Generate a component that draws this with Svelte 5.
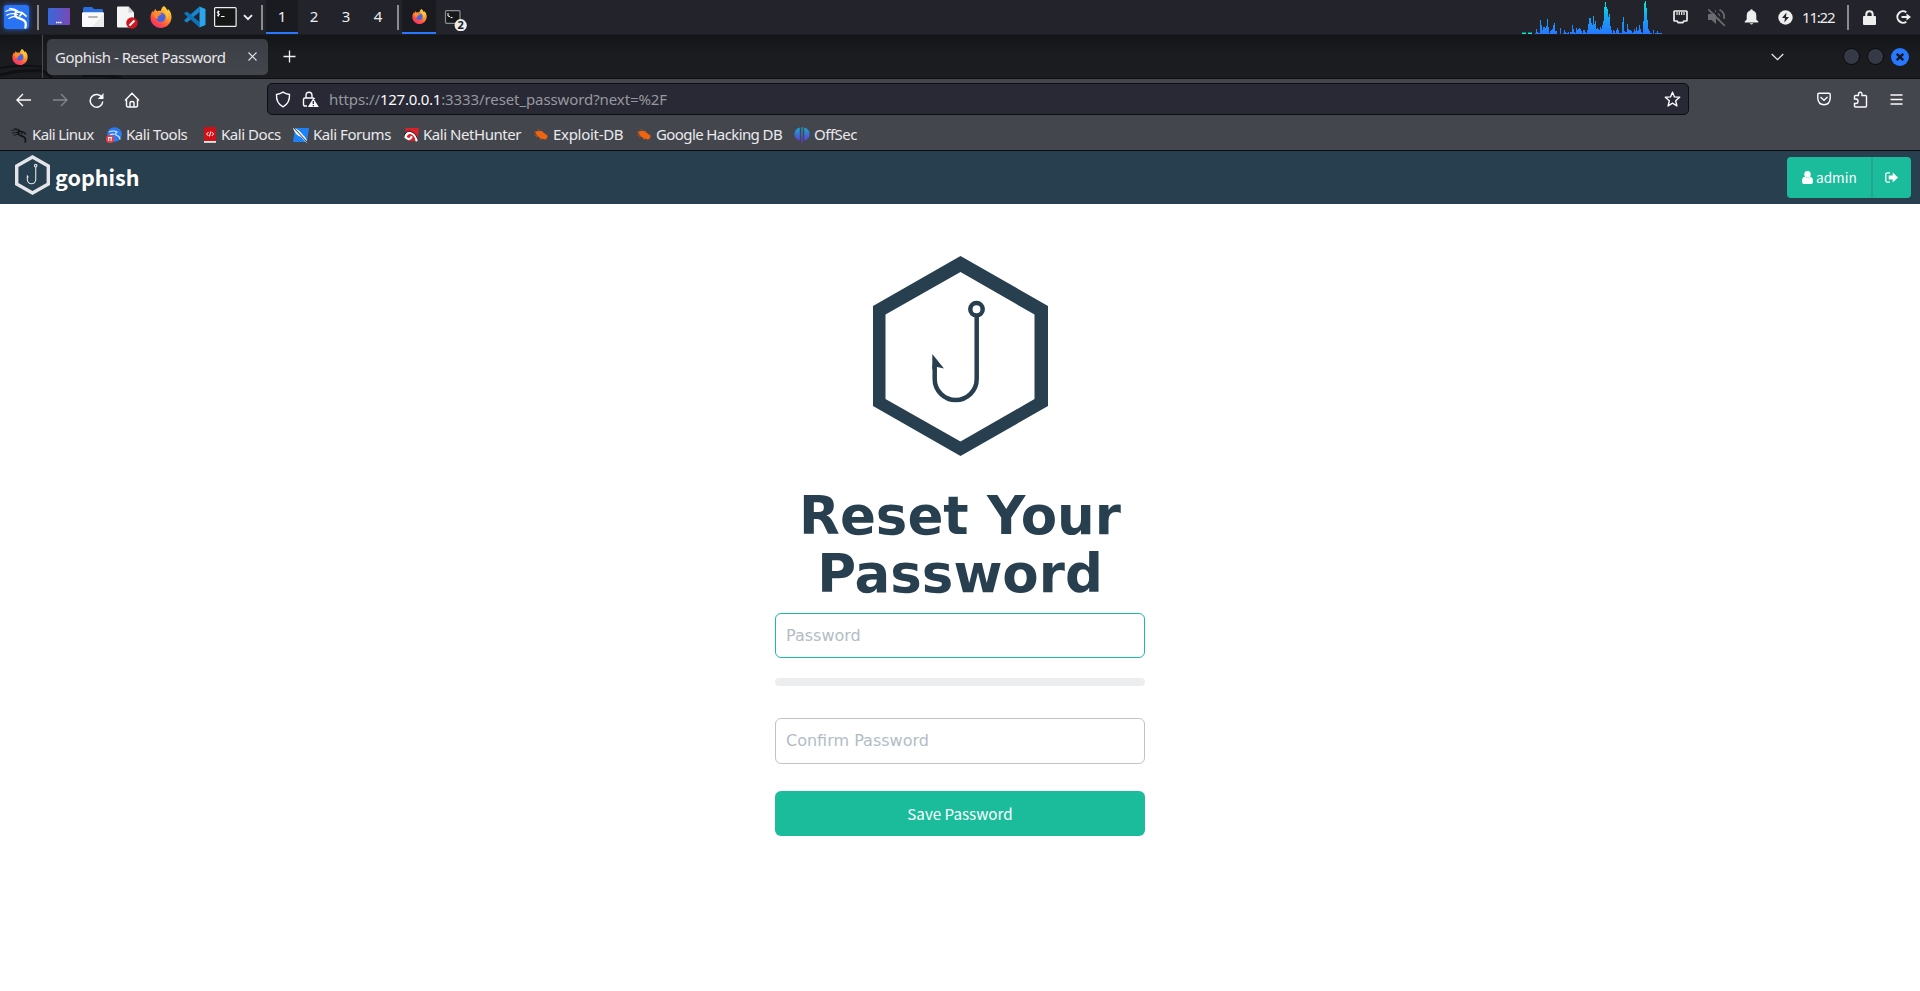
<script>
  const bars = [
    1,5,2,1,1,14,9,4,7,7,6,8,15,7,1,3,4,5,9,11,3,3,0,0,0,6,0,0,1,4,2,1,1,2,0,2,2,9,5,2,1,6,4,5,6,5,3,1,4,4,2,1,
    4,10,16,16,11,9,18,10,13,5,6,5,4,7,5,9,13,27,32,27,25,17,20,8,4,1,4,3,1,4,6,4,1,1,1,12,17,3,2,2,10,5,4,4,3,1,2,5,3,7,
    3,4,9,5,2,1,13,31,33,26,14,5,3,1,1,0,4,0,1,1,3,1,1,1,1
  ];
  const bookmarks = [
    { name: 'Kali Linux', icon: 'dragon', gap: 5, w: 61, after: 13, track: -0.6 },
    { name: 'Kali Tools', icon: 'tools', gap: 4, w: 64, after: 13, track: -0.45 },
    { name: 'Kali Docs', icon: 'docs', gap: 2, w: 60, after: 12, track: -0.45 },
    { name: 'Kali Forums', icon: 'forums', gap: 4, w: 78, after: 12, track: -0.45 },
    { name: 'Kali NetHunter', icon: 'hunter', gap: 4, w: 98, after: 12, track: -0.45 },
    { name: 'Exploit-DB', icon: 'bug', gap: 4, w: 71, after: 12, track: -0.3 },
    { name: 'Google Hacking DB', icon: 'bug', gap: 4, w: 126, after: 12, track: -0.6 },
    { name: 'OffSec', icon: 'offsec', gap: 4, w: 44, after: 0, track: -0.5 }
  ];
</script>

{#snippet firefox(size)}
  <svg width={size} height={size} viewBox="0 0 22 22">
    <defs>
      <linearGradient id="ffg" x1=".85" y1="0" x2=".2" y2="1">
        <stop offset="0" stop-color="#ffe34a" /><stop offset=".4" stop-color="#ff9a2b" /><stop offset=".75" stop-color="#ff4a45" /><stop offset="1" stop-color="#f02a86" />
      </linearGradient>
    </defs>
    <path fill="url(#ffg)" d="M13.8 0c2 1.300 2.800 2.800 3.500 4.400.6-.1.500-.9.400-1.600C20.400 5 21.600 8 21.500 11.300 21.300 17.300 16.800 22 11 22S.5 17.500.5 11.700c0-3 .8-5 2.200-7L3 6.600l2.400-3.800c.2 1.300.8 2 2 2.400 1-.5 2.300-.5 3.300-.2C11.300 3 12 1.300 13.800 0z" />
    <circle cx="10.800" cy="11.400" r="4.700" fill="#4a63e0" />
    <path fill="#ff8b2c" d="M3 7.500c2-1.800 4.500-2 6.500-.5 1.200.2 2 .6 2.600 1.300-1.800.3-2.200 1.200-3.700 1.700-1 .4-.8 2 .2 3-2.600-.3-5-2.400-5.600-5.500z" />
    <path fill="#ffc63c" d="M14.300 5.500c2.500 2.400 3.300 5.300 2.200 8.200 2-1.700 2.300-5.500 1.200-8l-2-1.700z" />
  </svg>
{/snippet}

{#snippet dragon(color, w)}
  <svg width={w} height={w} viewBox="0 0 24 24" fill="none" stroke={color} stroke-linecap="round">
    <path stroke-width="1.300" d="M1 5.500c4-2 8-2 12 .3M2 9.500c3-1.700 7-2 11-.6M4 13c2-1.500 4.500-2.200 8-2.100M5 2.500c3 0 6 .8 8.500 2.600" />
    <path stroke-width="2.400" d="M11.500 6c-1.500 2.500-1 5 1.500 6.200 4 1.500 7.500 2 8.500 5.300.5 2 .2 3.500-.2 5" />
    <path stroke-width="1.800" d="M13 6.500c3-.3 5.500.5 7 2.200l2 1.800M17 8.500l-1.500 1.700" />
  </svg>
{/snippet}

{#snippet hexHook(w, h, color, frame, hook)}
  <svg width={w} height={h} viewBox="0 0 175 200">
    <path fill={color} fill-rule="evenodd" d={frame} />
    <g fill="none" stroke={color} stroke-width={hook}>
      <circle cx="103.500" cy="53.300" r="6.200" />
      <path d="M103.700 60v63a21 21 0 0 1-42 0v-14" />
    </g>
    <path fill={color} d="M59.300 98l11.700 14.500-9-2-2.700 3z" />
  </svg>
{/snippet}

<div class="screen">
  <header class="panel">
    <span class="cell kali">
      <span class="kbox">{@render dragon('#fff', 23)}</span>
    </span>
    <i class="sep"></i>
    <div class="launch">
      <span class="cell w34">
        <svg width="22" height="18" viewBox="0 0 22 18"><defs><linearGradient id="dk"><stop offset="0" stop-color="#3868dc" /><stop offset="1" stop-color="#7a48b4" /></linearGradient></defs><rect width="22" height="17" rx="1" fill="url(#dk)" /><path d="M8 14.500h1.500m.5 0h1.500m.5 0h1.500" stroke="#fff" stroke-width="1.400" /></svg>
      </span>
      <span class="cell w34">
        <svg width="22" height="20" viewBox="0 0 22 20"><path fill="#2a6fdc" d="M1 2q0-2 1.500-2H10l2 2h8q1 0 1 1.500V8H1z" /><rect y="5.300" width="22" height="14.700" rx="1" fill="#fafafa" /><path d="M22 6v14H10z" fill="#ececec" /><path d="M7 10h8" stroke="#b5b5b5" stroke-width="2" stroke-linecap="round" /></svg>
      </span>
      <span class="cell w34">
        <svg width="22" height="23" viewBox="0 0 22 23"><path fill="#f5f5f5" d="M1 1.500Q1 .5 2 .5h10.500l5.500 6v14q0 1-1 1H2q-1 0-1-1z" /><path fill="#d0d0d0" d="M12.500.5v6H18z" /><circle cx="16" cy="17" r="5.800" fill="#cf1720" /><path d="M13.500 19.500l5-5" stroke="#fff" stroke-width="2" /></svg>
      </span>
      <span class="cell w34">{@render firefox(22)}</span>
      <span class="cell w34">
        <svg width="22" height="22" viewBox="0 0 22 22"><path fill="#1687cf" d="M15.500.5v5.600L3 16.500.7 15.300q-1-.7 0-1.500z" /><path fill="#0f73b8" d="M15.500 21.500v-5.600L3 5.500.7 6.700q-1 .7 0 1.500z" /><path fill="#2ba4ee" d="M15.500.5l6 2.500v16l-6 2.500z" /></svg>
      </span>
      <span class="cell term">
        <svg width="23" height="20" viewBox="0 0 23 20"><rect x=".6" y=".6" width="21.500" height="18.800" rx="1" fill="#151616" stroke="#eee" stroke-width="1.200" /><path d="M5.500 4.500q-2-.5-2.300.6t1.200 1.300 1 1.400-2.300.5M4.300 3.600v6M7 9.500h3.500" fill="none" stroke="#fff" /></svg>
      </span>
      <span class="cell chev">
        <svg width="10" height="7" viewBox="0 0 10 7"><path d="M1 1.200l4 4 4-4" fill="none" stroke="#eee" stroke-width="1.900" /></svg>
      </span>
    </div>
    <i class="sep"></i>
    <div class="spaces">
      {#each [1, 2, 3, 4] as n}
        <span class="space" class:on={n === 1}>{n}</span>
      {/each}
    </div>
    <i class="sep late"></i>
    <span class="cell task on">{@render firefox(15)}</span>
    <span class="cell task2">
      <svg width="25" height="26" viewBox="0 0 25 26"><rect x="1.500" y="5.700" width="14.500" height="12.600" rx="1" fill="#17181a" stroke="#8a8c90" stroke-width="1.200" /><path d="M4 8v3l2 .5M6.500 12.500h2" fill="none" stroke="#fff" /><circle cx="16.700" cy="20.200" r="6.100" fill="#ececec" /><text x="16.700" y="24.200" text-anchor="middle" font-size="11" font-weight="700" fill="#1b1c20">2</text></svg>
    </span>

    <div class="tray">
      <svg class="graph" width="141" height="34" viewBox="0 0 141 34">
        <defs><linearGradient id="cpu" gradientUnits="userSpaceOnUse" x1="0" y1="0" x2="0" y2="34"><stop offset="0" stop-color="#00f5dc" /><stop offset=".5" stop-color="#16a5f0" /><stop offset="1" stop-color="#2777ff" /></linearGradient></defs>
        <path d="M0 32.500h4M6 32.500h4" stroke="#0b7f78" /><path d="M0 33.500h4M6 33.500h4" stroke="#1be8c8" />
        {#each bars as h, i}
          <rect x={13 + i} y={34 - h} width="1" height={h} fill="url(#cpu)" />
        {/each}
      </svg>
      <svg class="net" width="15" height="14" viewBox="0 0 15 14"><path d="M1.800 1h11.400q.8 0 .8.8v8.400q0 .8-.8.8H11L9.800 12.600H5.200L4 11H1.800q-.8 0-.8-.8V1.800Q1 1 1.800 1z" fill="none" stroke="#eee" stroke-width="1.700" /><path d="M4 2v3M6.300 2v3M8.700 2v3M11 2v3" stroke="#eee" stroke-width="1.200" /></svg>
      <svg class="mute" width="19" height="19" viewBox="0 0 19 19" fill="none" stroke="#6b6c70"><path fill="#6b6c70" stroke="none" d="M1 6h3.500L9 2v14l-4.500-4H1z" /><path stroke-width="1.700" d="M11 5.500q3 3.500 0 7M12.500 1.800q5.500 2.500 4.500 9" /><path stroke="#22232b" stroke-width="2" d="M3 0l16 16" /><path stroke-width="1.800" d="M1.300 1.300l16.500 16.500" /></svg>
      <svg class="bell" width="15" height="16" viewBox="0 0 15 16" fill="#eee"><path d="M7.500.3q1.200 0 1.300 1.300 3.500 1 3.500 5v4l2 2v.9H.7v-.9l2-2v-4q0-4 3.500-5Q6.300.3 7.500.3zM5.700 14.300h3.600q-1.800 2.400-3.600 0z" /></svg>
      <svg class="power" width="15" height="15" viewBox="0 0 15 15"><circle cx="7.500" cy="7.500" r="7.200" fill="#eee" /><path d="M8.500 2.500L4 8h3l-.7 4.500L11 7H8z" fill="#22232b" /></svg>
      <span class="clock">11:22</span>
      <i class="sep traysep"></i>
      <svg class="lock" width="13" height="15" viewBox="0 0 13 15"><path d="M3.300 7V4.500q0-3.300 3.200-3.300t3.200 3.300V7" fill="none" stroke="#eee" stroke-width="2" /><rect y="6" width="13" height="9" rx="1" fill="#eee" /></svg>
      <svg class="out" width="15" height="14" viewBox="0 0 15 14"><path d="M10.300 2.300A5.700 5.700 0 1 0 10.300 11.700M5.500 7H12" fill="none" stroke="#eee" stroke-width="2" /><path d="M10.500 3.500L15 7l-4.500 3.500z" fill="#eee" /></svg>
    </div>
  </header>

  <div class="tabs">
    <svg class="swirl" width="130" height="43" viewBox="0 0 130 43" fill="none" stroke="#101114"><path stroke-width="2" d="M0 33q22-4 43-1" /><path stroke-width="3" d="M0 40q24-6 43-4l9 7M82 41q20-2 40 2" /></svg>
    <span class="pinned">{@render firefox(16)}</span>
    <div class="tab"><span class="tabname">Gophish - Reset Password</span>
      <svg width="9" height="9" viewBox="0 0 9 9"><path d="M.5.5l8 8M8.500.5l-8 8" stroke="#e6e6e8" stroke-width="1.100" /></svg>
    </div>
    <svg class="plus" width="13" height="13" viewBox="0 0 13 13"><path d="M6.500.5v12M.5 6.500h12" stroke="#f2f2f4" stroke-width="1.300" /></svg>
    <svg class="all" width="13" height="8" viewBox="0 0 13 8"><path d="M.7 1l5.800 5.700L12.300 1" fill="none" stroke="#e6e6e8" stroke-width="1.300" /></svg>
    <i class="dot"></i><i class="dot"></i>
    <i class="dot close"><svg width="8" height="8" viewBox="0 0 8 8"><path d="M.8.8l6.400 6.400M7.200.8L.8 7.200" stroke="#15161c" stroke-width="2.300" /></svg></i>
  </div>

  <div class="toolbar">
    <div class="nav">
      <span class="nb"><svg width="16" height="14" viewBox="0 0 16 14" fill="none" stroke="#fbfbfe" stroke-width="1.400"><path d="M15 7H1.500M7 1L1 7l6 6" /></svg></span>
      <span class="nb"><svg width="16" height="14" viewBox="0 0 16 14" fill="none" stroke="#85868b" stroke-width="1.300"><path d="M1 7h13.500M9 1l6 6-6 6" /></svg></span>
      <span class="nb"><svg width="15" height="15" viewBox="0 0 15 15" fill="none" stroke="#fbfbfe" stroke-width="1.500"><path d="M13 4.700A6.300 6.300 0 1 0 13.800 8.500" /><path fill="#fbfbfe" stroke="none" d="M14.500 0v6H8.800z" /></svg></span>
      <span class="nb"><svg width="16" height="16" viewBox="0 0 16 16" fill="none" stroke="#fbfbfe" stroke-width="1.400"><path d="M1 8.500L8 1.300l7 7.200M2.500 7.500v6q0 1.500 1.500 1.500h8q1.500 0 1.500-1.500v-6M6 15v-4q0-1.500 2-1.500T10 11v4" /></svg></span>
    </div>
    <div class="url">
      <svg width="16" height="17" viewBox="0 0 16 17" fill="none" stroke="#fbfbfe" stroke-width="1.400"><path d="M8 1.200c2 1.300 4 2 6.500 2.300.3 5.500-1.500 9.700-6.500 12.300C3 13.200 1.200 9 1.500 3.500 4 3.200 6 2.500 8 1.200z" /></svg>
      <svg class="warn" width="17" height="17" viewBox="0 0 17 17"><path d="M4 7V4.500Q4 1.200 7 1.200t3 3.300V7M5 15H3.200q-1.700 0-1.700-1.500v-5Q1.500 7 3.200 7h7.600q1.500 0 1.700 1" fill="none" stroke="#fbfbfe" stroke-width="1.400" /><path d="M11.300 7.200l5.500 8.800H5.800z" fill="#fbfbfe" /><path d="M11.300 10v3m0 1v1.200" stroke="#282934" stroke-width="1.300" /></svg>
      <span class="addr">https://<b>127.0.0.1</b>:3333/reset_password?next=%2F</span>
      <svg class="star" width="17" height="17" viewBox="0 0 17 17" fill="none" stroke="#fbfbfe" stroke-width="1.400" stroke-linejoin="round"><path d="M8.500 1.200l2 4.700 5.200.4-4 3.500 1.200 5.200-4.400-2.800L4.100 15l1.200-5.200-4-3.500 5.200-.4z" /></svg>
    </div>
    <div class="acts">
      <svg width="14" height="14" viewBox="0 0 14 14" fill="none" stroke="#fbfbfe" stroke-width="1.400"><path d="M2 1.200h10q1.200 0 1.200 1.200v4Q12.700 12.600 7 12.800 1.300 12.600.8 6.400v-4Q.8 1.200 2 1.200z" /><path d="M3.500 5L7 8.200 10.500 5" /></svg>
      <svg class="ext" width="15" height="17" viewBox="0 0 15 17" fill="none" stroke="#fbfbfe" stroke-width="1.400"><path d="M1.500 8V5.500q0-1 1-1h3V3q0-1.800 1.700-1.800T9 3v1.500h3.500q1 0 1 1V15q0 1-1 1h-10q-1 0-1-1v-2.500H3q2 0 2-2.200T3 8z" /></svg>
      <svg width="13" height="11" viewBox="0 0 13 11"><path d="M.5 1h12M.5 5.500h12M.5 10h12" stroke="#fbfbfe" stroke-width="1.300" /></svg>
    </div>
  </div>

  <div class="marks">
    {#each bookmarks as b}
      <span class="mark" style="column-gap:{b.gap}px;margin-right:{b.after}px">
        {#if b.icon === 'dragon'}
          {@render dragon('#111216', 16)}
        {:else if b.icon === 'tools'}
          <svg width="16" height="16" viewBox="0 0 16 16"><circle cx="8.500" cy="7.500" r="7.300" fill="#2c7bf2" /><path d="M3 5q4-2 8 0-3 2 0 3.500 3 1 3 4M4 8q2-1.500 4.500-.5" fill="none" stroke="#dbe9ff" stroke-width="1.200" /><circle cx="4" cy="12" r="4" fill="#ea3f48" /><path d="M2.700 10.500v3.500M5.200 10.500v3.500M2 10.500h4" stroke="#fff" /></svg>
        {:else if b.icon === 'docs'}
          <svg width="16" height="16" viewBox="0 0 16 16"><path fill="#d10f17" d="M1 0h12v14H1z" /><path fill="#eee" d="M1 14h12v1.800H1z" /><path d="M5.500 5L3.500 7l2 2M8.700 5l2 2-2 2M7.700 4.500l-1.200 5" fill="none" stroke="#fff" /></svg>
        {:else if b.icon === 'forums'}
          <svg width="16" height="16" viewBox="0 0 16 16"><path fill="#1e82f5" d="M2 1h14l-2 14H0z" /><path d="M0 1q2 7 8 9l6 6q0-5-4-8Q6 2 0 1z" fill="#f3f6fa" /><path d="M1 1l13 14" stroke="#23272f" stroke-width=".9" /></svg>
        {:else if b.icon === 'hunter'}
          <svg width="16" height="16" viewBox="0 0 16 16"><path fill="#dc202b" d="M2 1h14l-2 13H5z" /><path d="M2.500 10.500q1-5 5-4.500 5 1 6 7.500M3.500 11q3 2.500 5-1" fill="none" stroke="#fff" stroke-width="2.200" stroke-linecap="round" /><path d="M1 8q3-5 7-3.500 5 1.500 6.500 7" fill="none" stroke="#24242a" stroke-width=".9" /></svg>
        {:else if b.icon === 'bug'}
          <svg width="16" height="16" viewBox="0 0 16 16"><path d="M1 5l5 2M5 2l2 5M9 4l1 4M15 8l-4 1M14 12l-4-2M8 13l-.500-4M3 10l4-1M1 8h5" stroke="#b9541f" stroke-width=".8" /><path d="M2.200 4.500L8 3.800l5 3.800 1.800 2.500-2.600 2.500-4.500-1.200-4-3.400z" fill="#f0640f" /></svg>
        {:else}
          <svg width="16" height="16" viewBox="0 0 16 16"><defs><linearGradient id="os" gradientUnits="userSpaceOnUse" x1="0" y1="0" x2="0" y2="16"><stop offset="0" stop-color="#10b0d0" /><stop offset="1" stop-color="#6a2bd8" /></linearGradient></defs><path fill="url(#os)" d="M5.800.6v13Q.4 12 .4 7.200T5.800.6zM7.400.3h1.300V16H7.400zM10.200.6q5.400 1.600 5.400 6.600t-5.400 6.400z" /></svg>
        {/if}
        <span class="mname" style="width:{b.w}px;letter-spacing:{b.track}px">{b.name}</span>
      </span>
    {/each}
  </div>

  <nav class="navbar">
    <div class="brand">
      {@render hexHook(35, 40, '#e3e5e8', 'M87.500 0L175 50V150L87.500 200 0 150V50zM87.500 20L17 60v80L87.500 180 158 140v-80z', 5.500)}
      <span>gophish</span>
    </div>
    <div class="group">
      <button class="admin"><svg width="11" height="13" viewBox="0 0 11 13" fill="#fff"><circle cx="5.500" cy="3.300" r="3.200" /><path d="M0 10.500Q0 6 2.700 5.700q2.800 1.800 5.600 0Q11 6 11 10.500 11 13 9 13H2Q0 13 0 10.500z" /></svg><span>admin</span></button>
      <button class="exit"><svg width="13" height="11" viewBox="0 0 13 11"><path d="M5 .8H2.500Q.8.8.8 2.500v6q0 1.700 1.700 1.700H5" fill="none" stroke="#fff" stroke-width="1.300" /><path d="M7.700.5L13 5.500l-5.300 5V7.600H3.700V3.400h4z" fill="#fff" /></svg></button>
    </div>
  </nav>

  <main>
    {@render hexHook(175, 200, '#283f50', 'M87.500 0L175 50V150L87.500 200 0 150V50zM87.500 16L12.500 58.500v84.500L87.500 185.500 161.500 143V58.500z', 4.5)}
    <h1>Reset Your Password</h1>
    <form>
      <input class="first" type="password" placeholder="Password" />
      <div class="strength"></div>
      <input type="password" class="second" placeholder="Confirm Password" />
      <button type="button" class="save">Save Password</button>
    </form>
  </main>
</div>

<style>
  :global(body) { margin: 0; background: #fff; }
  * { box-sizing: border-box; }
  svg { display: block; flex: none; }
  i { display: block; flex: none; }
  button { border: 0; padding: 0; margin: 0; }
  .screen { width: 1920px; height: 991px; overflow: hidden; display: flex; flex-direction: column; background: #fff; font-family: "Noto Sans", sans-serif; }

  .panel { height: 35px; flex: none; display: flex; background: #22232b; border-bottom: 1px solid #1d1e24; color: #eee; }
  .cell { display: flex; align-items: center; justify-content: center; height: 34px; flex: none; }
  .kali { width: 37px; justify-content: flex-start; padding-left: 4px; }
  .kbox { width: 25px; height: 24px; border-radius: 3px; background: #2874f5; display: flex; align-items: center; justify-content: center; box-shadow: 0 0 5px #2467d9; }
  .sep { width: 2px; height: 25px; margin-top: 5px; background: #8b8c8f; }
  .launch { display: flex; padding-left: 3px; width: 222px; }
  .w34 { width: 34px; }
  .term { width: 26px; }
  .chev { width: 20px; }
  .spaces { display: flex; padding-left: 3px; }
  .space { width: 32px; height: 34px; line-height: 33px; text-align: center; font-size: 15px; border-bottom: 2px solid transparent; }
  .space.on, .task.on { background: #1a1b20; border-bottom: 2px solid #2777ff; }
  .sep.late { margin-left: 3px; margin-right: 3px; }
  .task { width: 34px; }
  .task2 { width: 34px; justify-content: flex-start; padding-left: 8px; align-items: flex-start; padding-top: 5px; }
  .tray { margin-left: auto; display: flex; align-items: center; height: 34px; width: 398px; }
  .net { margin-left: 10px; margin-top: -1px; }
  .mute { margin-left: 19px; }
  .bell { margin-left: 18px; }
  .power { margin-left: 19px; }
  .clock { margin-left: 9px; width: 34px; font-size: 15px; line-height: 34px; letter-spacing: -1.2px; white-space: nowrap; }
  .traysep { margin: 0 0 0 11px; }
  .lock { margin-left: 14px; }
  .out { margin-left: 20px; }

  .tabs { position: relative; height: 44px; flex: none; display: flex; align-items: center; background: linear-gradient(#141519, #1b1c20 45%, #1b1c20); border-bottom: 1px solid #0e0f13; }
  .swirl { position: absolute; left: 0; top: 0; }
  .pinned { position: relative; width: 43px; height: 43px; display: flex; align-items: center; padding-left: 12px; border-right: 1px solid #4a4b50; flex: none; }
  .tab { position: relative; width: 221px; height: 36px; margin-left: 4px; border-radius: 5px; background: linear-gradient(#3c3e45, #44464d); display: flex; align-items: center; padding: 0 11px 0 8px; color: #e8e8ea; font-size: 15px; justify-content: space-between; }
  .tabname { white-space: nowrap; letter-spacing: -0.48px; }
  .plus { margin-left: 15px; }
  .all { margin-left: auto; margin-right: 59px; }
  .dot { width: 17px; height: 17px; border-radius: 50%; background: #363a46; border: 1px solid #08090b; margin-right: 7px; }
  .dot.close { width: 18px; height: 18px; background: #2777ff; border: 0; margin-right: 11px; display: flex; align-items: center; justify-content: center; }

  .toolbar { height: 40px; flex: none; display: flex; background: #44464d; padding-top: 4px; }
  .nav { width: 267px; padding-left: 6px; display: flex; height: 34px; align-items: center; flex: none; }
  .nb { width: 36px; display: flex; justify-content: center; }
  .url { width: 1422px; height: 32px; background: #282934; border: 1px solid #0d0e12; border-radius: 5px; display: flex; align-items: center; padding: 0 7px; }
  .warn { margin-left: 11px; }
  .addr { margin-left: 10px; font-size: 15px; color: #97989f; white-space: nowrap; letter-spacing: -0.1px; }
  .addr b { font-weight: 400; color: #fbfbfe; letter-spacing: -0.25px; }
  .star { margin-left: auto; }
  .acts { display: flex; align-items: center; height: 32px; margin-left: 128px; }
  .ext { margin-left: 22px; margin-right: 22px; }

  .marks { height: 32px; flex: none; display: flex; align-items: flex-start; background: #44464d; border-bottom: 1px solid #0d0e12; padding: 0 0 0 11px; color: #eaeaec; font-size: 15px; }
  .mark { display: flex; align-items: center; height: 31px; }
  .mname { white-space: nowrap; padding-bottom: 2px; }

  .navbar { height: 53px; flex: none; background: #283f50; display: flex; justify-content: space-between; padding: 0 9px 0 15px; align-items: flex-start; }
  .brand { display: flex; padding-top: 4px; color: #fff; font: 700 21.500px/40px "Noto Sans CJK SC", sans-serif; gap: 5px; }
  .brand span { padding-top: 2px; }
  .group { display: flex; height: 41px; margin-top: 6px; border-radius: 4px; overflow: hidden; }
  .group button { background: #1abc9c; color: #fff; font: 400 13.600px "Noto Sans CJK SC", sans-serif; display: flex; align-items: center; }
  .group .admin { width: 86px; padding-left: 15px; gap: 3px; border-right: 2px solid #1fa88f; }
  .admin span { padding-bottom: 2px; }
  .group .exit { width: 38px; padding-left: 12px; }

  main { display: flex; flex-direction: column; align-items: center; padding-top: 52px; }
  h1 { margin: 31px 0 0; width: 370px; text-align: center; font: 700 53px/58.300px "DejaVu Sans", sans-serif; color: #283f50; }
  form { width: 370px; display: flex; flex-direction: column; }
  input { width: 100%; height: 45px; border: 1px solid #bdc3c7; border-radius: 6px; padding: 0 10px; font: 16px "DejaVu Sans", sans-serif; outline: 0; background: #fff; margin: 0; }
  input::placeholder { color: #b2bcc5; opacity: 1; }
  .first { border-color: #1abc9c; margin-top: 9px; }
  .strength { height: 8px; border-radius: 4px; background: #ebedef; margin: 20px 0 32px; }
  .second { height: 46px; }
  .save { margin-top: 27px; height: 45px; border-radius: 6px; background: #1abc9c; color: #fff; font: 400 15.200px "Noto Sans CJK SC", sans-serif; }
</style>
